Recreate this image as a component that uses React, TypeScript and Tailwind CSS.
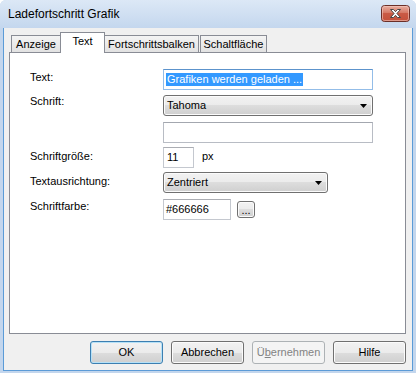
import React from 'react';

const btnFace =
  'bg-[linear-gradient(#f2f2f2,#ebebeb_50%,#dddddd_50%,#cfcfcf)] border border-[#707070] rounded-[3px] shadow-[inset_0_0_0_1px_#fbfbfb]';

function Arrow() {
  return (
    <svg width="7" height="4" viewBox="0 0 7 4" className="shrink-0">
      <path d="M0 0h7L3.5 4z" fill="#000" />
    </svg>
  );
}

function CloseButton() {
  return (
    <svg width="29" height="17" viewBox="0 0 29 17">
      <defs>
        <linearGradient id="cb" x1="0" y1="0" x2="0" y2="1">
          <stop offset="0" stopColor="#eab2a5" />
          <stop offset="0.45" stopColor="#d67a66" />
          <stop offset="0.5" stopColor="#c95a45" />
          <stop offset="1" stopColor="#c4503a" />
        </linearGradient>
      </defs>
      <rect x="0.5" y="0.5" width="28" height="16" rx="3" fill="url(#cb)" stroke="#6b2f28" />
      <rect x="1.5" y="1.5" width="26" height="14" rx="2" fill="none" stroke="#f3c9bf" strokeOpacity="0.6" />
      <path
        d="M9.5 4.5h3l2 2.2 2-2.2h3l-3.6 4 3.6 4h-3l-2-2.2-2 2.2h-3l3.6-4z"
        fill="#fff"
        stroke="#474747"
        strokeWidth="1"
        strokeLinejoin="round"
      />
    </svg>
  );
}

function Row({ label, labelPad, top, children }: { label: string; labelPad: string; top: string; children: React.ReactNode }) {
  return (
    <div className={`flex items-start ${top}`}>
      <div className={`w-[133px] shrink-0 leading-[13px] ${labelPad}`}>{label}</div>
      {children}
    </div>
  );
}

export default function App() {
  const tabs = [
    { label: 'Anzeige', w: 'w-[49px]', cls: 'border-l border-t' },
    { label: 'Text', w: 'w-[45px]', cls: 'border-l border-t border-r', active: true },
    { label: 'Fortschrittsbalken', w: 'w-[94px]', cls: 'border-t border-r' },
    { label: 'Schaltfläche', w: 'w-[67px]', cls: 'border-l border-t border-r ml-[1px]' },
  ];

  return (
    <div className="w-[416px] h-[373px] flex flex-col bg-[#c3d6ed] rounded-t-[6px] overflow-hidden font-['Liberation_Sans',Arial,sans-serif] text-[11px] text-black">
      {/* Title bar */}
      <div className="h-[28px] shrink-0 flex items-start bg-gradient-to-b from-[#dce8f6] to-[#c4d7ee] pl-[8px] pr-[6px]">
        <span className="text-[12px] leading-[14px] pt-[7px]">Ladefortschritt Grafik</span>
        <div className="ml-auto mt-[5px] flex">
          <CloseButton />
        </div>
      </div>

      {/* Client area */}
      <div className="flex-1 ml-[3px] mr-[3px] mb-[2px] border-x border-b border-[#5b9bd7] bg-[#f0f0f0] pt-[4px]">
        {/* Tabs */}
        <div className="ml-[5px] pl-[2px] h-[20px] flex items-end">
          {tabs.map((t) =>
            t.active ? (
              <div
                key={t.label}
                className={`${t.w} h-[21px] -mb-px relative z-10 bg-white border-[#898c95] ${t.cls} flex justify-center pt-[2px] leading-[13px]`}
              >
                {t.label}
              </div>
            ) : (
              <div
                key={t.label}
                className={`${t.w} h-[17px] bg-gradient-to-b from-[#f4f4f4] to-[#e2e2e2] border-[#898c95] ${t.cls} flex justify-center pt-[2px] leading-[13px]`}
              >
                {t.label}
              </div>
            )
          )}
        </div>

        {/* Panel */}
        <div className="ml-[5px] w-[397px] h-[282px] border border-[#898c95] bg-white pl-[20px] pt-[16px]">
          <Row label="Text:" labelPad="pt-[2px]" top="">
            <div className="w-[210px] h-[21px] border border-[#93bde8] border-t-[#5c93cc] bg-white flex items-center pl-[2px]">
              <span className="bg-[#3399ff] text-white leading-[13px] px-px">Grafiken werden geladen ...</span>
            </div>
          </Row>

          <Row label="Schrift:" labelPad="pt-0" top="mt-[5px]">
            <div className={`w-[210px] h-[21px] ${btnFace} flex items-center pl-[3px] pr-[5px]`}>
              <span className="flex-1 leading-[13px]">Tahoma</span>
              <Arrow />
            </div>
          </Row>

          <Row label="" labelPad="" top="mt-[6px]">
            <div className="w-[210px] h-[21px] border border-[#b8bcc4] border-t-[#a3a7af] bg-white" />
          </Row>

          <Row label="Schriftgröße:" labelPad="pt-[3px]" top="mt-[4px]">
            <div className="w-[31px] h-[21px] border border-[#c4c8cf] border-t-[#abadb3] bg-white flex items-center pl-[3px] leading-[13px]">
              11
            </div>
            <span className="ml-[8px] pt-[3px] leading-[13px]">px</span>
          </Row>

          <Row label="Textausrichtung:" labelPad="pt-[3px]" top="mt-[4px]">
            <div className={`w-[165px] h-[21px] ${btnFace} flex items-center pl-[3px] pr-[5px]`}>
              <span className="flex-1 leading-[13px]">Zentriert</span>
              <Arrow />
            </div>
          </Row>

          <Row label="Schriftfarbe:" labelPad="pt-[1px]" top="mt-[6px]">
            <div className="w-[68px] h-[21px] border border-[#c4c8cf] border-t-[#abadb3] bg-white flex items-center pl-[2px] leading-[13px]">
              #666666
            </div>
            <div className={`ml-[6px] mt-[2px] w-[18px] h-[17px] ${btnFace} flex items-end justify-center pb-[2px] leading-[9px]`}>
              ...
            </div>
          </Row>
        </div>

        {/* Buttons */}
        <div className="ml-[5px] w-[397px] mt-[7px] flex justify-end gap-[8px]">
          <div className="w-[73px] h-[23px] bg-[linear-gradient(#f2f2f2,#ebebeb_50%,#dddddd_50%,#cfcfcf)] border border-[#3c7fb1] rounded-[3px] shadow-[inset_0_0_0_1px_#b6e1f7] flex items-center justify-center leading-[13px]">
            OK
          </div>
          <div className={`w-[73px] h-[23px] ${btnFace} flex items-center justify-center leading-[13px]`}>
            Abbrechen
          </div>
          <div className="w-[73px] h-[23px] bg-[#f4f4f4] border border-[#adb2b5] rounded-[3px] flex items-center justify-center leading-[13px] text-[#838383]">
            Ü<span className="underline underline-offset-1">b</span>ernehmen
          </div>
          <div className={`w-[73px] h-[23px] ${btnFace} flex items-center justify-center leading-[13px]`}>
            Hilfe
          </div>
        </div>
      </div>
    </div>
  );
}
